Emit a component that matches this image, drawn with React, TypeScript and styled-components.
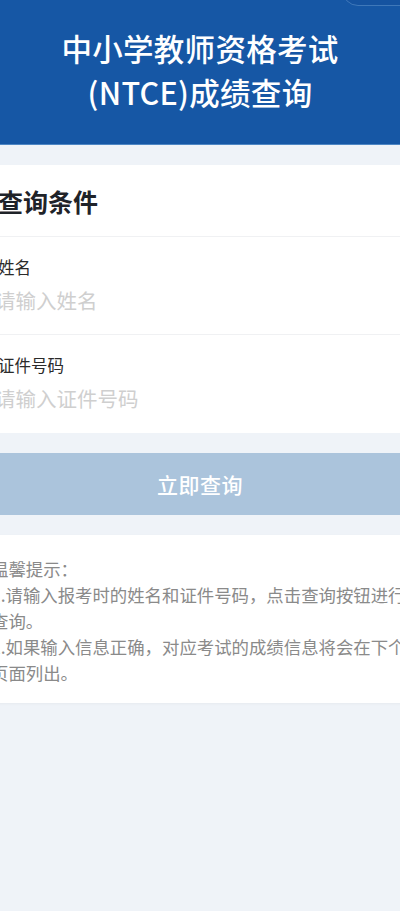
import React from "react";
import styled, { createGlobalStyle } from "styled-components";

const Global = createGlobalStyle`
  html, body { margin: 0; padding: 0; background: #eff3f8; }
  body { font-family: "Noto Sans CJK SC", "Noto Sans", sans-serif; }
  #root { min-height: 911px; overflow: hidden; }
`;

const Page = styled.div`
  width: 100%;
  min-height: 911px;
  background: #eff3f8;
  overflow: hidden;
`;

const Header = styled.header`
  position: relative;
  height: 145px;
  box-sizing: border-box;
  padding-top: 26px;
  background: #1657a5;
  border-bottom: 1px solid #4d86c4;
  color: #ffffff;
  text-align: center;
`;

const Title = styled.h1`
  margin: 0;
  font-size: 30.5px;
  line-height: 44px;
  font-weight: 500;
  letter-spacing: 0.3px;
`;

const Capsule = styled.div`
  position: absolute;
  top: -28px;
  right: -20px;
  width: 76px;
  height: 32px;
  border-radius: 16px;
  background: #1553a0;
  border: 1px solid #3f78b9;
`;

const Content = styled.main`
  margin: 0 -22px;
  padding: 20px 0 0;
  display: flex;
  flex-direction: column;
  gap: 20px;
`;

const Card = styled.section`
  background: #ffffff;
`;

const CardTitle = styled.h2`
  margin: 0;
  height: 71px;
  display: flex;
  align-items: center;
  padding: 0 20px;
  font-size: 25px;
  font-weight: 700;
  color: #1f2329;
  border-bottom: 1px solid #f0f1f3;
`;

const Field = styled.div<{ $last?: boolean }>`
  height: 98px;
  box-sizing: border-box;
  padding: 14px 20px 0 20px;
  border-bottom: ${(p) => (p.$last ? "none" : "1px solid #f0f1f3")};
  display: flex;
  flex-direction: column;
`;

const Label = styled.label`
  font-size: 16.5px;
  line-height: 32px;
  color: #2b2b2b;
`;

const Input = styled.input`
  border: none;
  outline: none;
  padding: 0;
  margin: 0 0 0 -3px;
  height: 34px;
  font-family: inherit;
  font-size: 20.5px;
  color: #333;
  background: transparent;
  &::placeholder { color: #cfcfcf; }
`;

const Button = styled.button`
  height: 62px;
  border: none;
  background: #abc4dc;
  color: #ffffff;
  font-family: inherit;
  font-size: 21px;
  font-weight: 500;
  letter-spacing: 0.5px;
`;

const Tips = styled.div`
  background: #ffffff;
  padding: 21px 6px 17px 13px;
  font-size: 17.4px;
  line-height: 26px;
  color: #8a8a8a;
  box-shadow: 0 1px 3px rgba(0, 0, 0, 0.04);
`;

const TipLine = styled.p`
  margin: 0;
`;

export default function App() {
  return (
    <Page>
      <Global />
      <Header>
        <Capsule />
        <Title>中小学教师资格考试</Title>
        <Title>(NTCE)成绩查询</Title>
      </Header>
      <Content>
        <Card>
          <CardTitle>查询条件</CardTitle>
          <Field>
            <Label>姓名</Label>
            <Input placeholder="请输入姓名" />
          </Field>
          <Field $last>
            <Label>证件号码</Label>
            <Input placeholder="请输入证件号码" />
          </Field>
        </Card>
        <Button>立即查询</Button>
        <Tips>
          <TipLine>温馨提示：</TipLine>
          <TipLine>1.请输入报考时的姓名和证件号码，点击查询按钮进行查询。</TipLine>
          <TipLine>2.如果输入信息正确，对应考试的成绩信息将会在下个页面列出。</TipLine>
        </Tips>
      </Content>
    </Page>
  );
}
